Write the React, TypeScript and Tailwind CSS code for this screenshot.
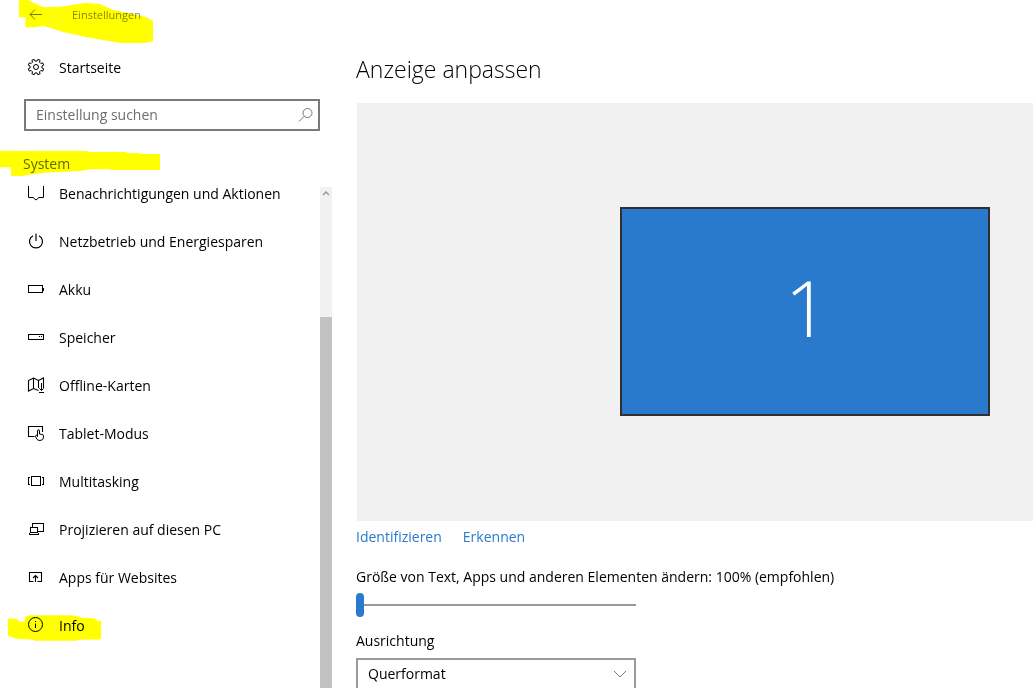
import React, { useState } from "react";

interface NavItem {
  label: string;
  icon: React.ReactNode;
}

interface IconProps {
  children: React.ReactNode;
  crisp?: boolean;
}

const Icon = ({ children, crisp }: IconProps) => (
  <svg
    viewBox="0 0 18 18"
    className="w-[18px] h-[18px] shrink-0"
    fill="none"
    stroke="currentColor"
    strokeWidth="1"
    shapeRendering={crisp ? "crispEdges" : "auto"}
    aria-hidden="true"
  >
    {children}
  </svg>
);

const GearIcon = () => {
  const points: string[] = [];
  for (let i = 0; i < 8; i++) {
    const steps = [
      [-13, 6],
      [-9, 7.9],
      [9, 7.9],
      [13, 6],
    ];
    steps.forEach(([offset, r]) => {
      const a = ((i * 45 + 22.5 + offset) * Math.PI) / 180;
      points.push(`${(9 + r * Math.cos(a)).toFixed(2)},${(9 + r * Math.sin(a)).toFixed(2)}`);
    });
  }
  return (
    <Icon>
      <polygon points={points.join(" ")} strokeLinejoin="round" />
      <circle cx="9" cy="9" r="2.5" />
    </Icon>
  );
};

const navItems: NavItem[] = [
  {
    label: "Benachrichtigungen und Aktionen",
    icon: (
      <Icon>
        <path d="M1.5 2v11.5H6L9 16l3-2.500h4.500V2" />
      </Icon>
    ),
  },
  {
    label: "Netzbetrieb und Energiesparen",
    icon: (
      <Icon>
        <path d="M6 3.700a6.500 6.500 0 1 0 6 0M9 1.500v7.500" strokeWidth="1.200" />
      </Icon>
    ),
  },
  {
    label: "Akku",
    icon: (
      <Icon crisp>
        <path d="M1.500 5.500h14v7h-14zM16.500 7.500v3" />
      </Icon>
    ),
  },
  {
    label: "Speicher",
    icon: (
      <Icon crisp>
        <path d="M1.500 6.500h15v5h-15zM12 8.500h1M14 8.500h1" />
      </Icon>
    ),
  },
  {
    label: "Offline-Karten",
    icon: (
      <Icon>
        <path d="M1.500 4.500L6.500 2l5 2.500 5-2.500V12M1.500 4.500v10.500L6.500 12.500l5 2M6.500 2v10.500M11.500 4.500V12" strokeWidth="1.100" />
        <path d="M14.500 7v7.500M12.300 12.300l2.200 2.200 2.200-2.200M12 16.500h5" />
      </Icon>
    ),
  },
  {
    label: "Tablet-Modus",
    icon: (
      <Icon>
        <path d="M7.500 12.500h-6v-10h14V8" strokeWidth="1.100" />
        <path d="M10.500 12.500V7q0-1.300 1-1.300t1 1.300v3l2.500.4q1.500.3 1.500 1.600v1q0 3.500-3.500 3.500-2.300 0-3.300-1.500l-1-2.200q-.5-1.600.7-1.600.6.100 1.100 1.300" />
      </Icon>
    ),
  },
  {
    label: "Multitasking",
    icon: (
      <Icon crisp>
        <path d="M4.500 4.500h9v9h-9zM3 5.500H1.500v7H3M15 5.500h1.500v7H15" />
      </Icon>
    ),
  },
  {
    label: "Projizieren auf diesen PC",
    icon: (
      <Icon crisp>
        <path d="M5.500 7V3.500h11v8H11M3.500 12V7.500h7V12M2.500 12.500h8M1.500 14.500h10M1.500 13.500h1M10.500 13.500h1" />
      </Icon>
    ),
  },
  {
    label: "Apps für Websites",
    icon: (
      <Icon>
        <path d="M6.500 13.500h-4v-9h12v9h-4M8.500 14V7.500M6 10l2.500-2.500L11 10" strokeWidth="1.100" />
      </Icon>
    ),
  },
  {
    label: "Info",
    icon: (
      <Icon>
        <circle cx="8.500" cy="8.500" r="7" />
        <path d="M8.500 7.500V12M8.500 5v1" />
      </Icon>
    ),
  },
];

// marker strokes, three units to a pixel
const marks = {
  title:
    "57,0 85,0 100,8 130,22 180,20 255,9 300,12 340,30 400,42 440,52 459,64 459,124 435,129 365,129 330,124 260,112 190,96 130,77 105,82 76,82 76,52 57,52",
  system:
    "0,0 263,0 265,3 378,3 380,6 420,7 422,9 480,9 480,57 333,57 332,55 270,55 238,60 195,62 130,65 88,71 70,75 33,75 33,49 0,49",
  info: "0,11 26,11 34,19 51,19 51,5 63,0 191,0 208,3 223,8 258,9 268,17 279,17 279,71 274,73 208,74 208,77 78,77 78,74 51,72 24,71 0,62",
};

const Sidebar = () => (
  <aside className="w-[332px] shrink-0 flex flex-col">
    <header className="relative flex items-center h-[30px] pl-[27px]">
      <button type="button" aria-label="Zurück" className="text-[#777]">
        <Icon>
          <path d="M15 8.500H3M8 3.500l-5 5 5 5" />
        </Icon>
      </button>
      <span className="pl-[27px] text-[11px] text-[#888]">Einstellungen</span>
      <svg
        viewBox="0 0 459 129"
        className="absolute left-0 top-0 w-[153px] h-[43px] mix-blend-multiply pointer-events-none"
        aria-hidden="true"
      >
        <polygon points={marks.title} fill="#ffff00" />
      </svg>
    </header>

    <a href="#startseite" className="flex items-center gap-[14px] h-12 mt-[13px] pl-[27px]">
      <GearIcon />
      Startseite
    </a>

    <div className="flex items-center h-8 mt-2 ml-6 mr-3 border-2 border-[#7a7a7a]">
      <input
        type="text"
        aria-label="Einstellung suchen"
        placeholder="Einstellung suchen"
        className="flex-1 min-w-0 h-full pb-[2px] pl-[10px] outline-none placeholder:text-[#6d6d6d]"
      />
      <button type="button" aria-label="Suchen" className="pr-[3px] text-[#777]">
        <Icon>
          <circle cx="10.500" cy="7" r="4.500" />
          <path d="M7.300 10.200L2 15.500" />
        </Icon>
      </button>
    </div>

    <div className="relative h-6 mt-5 mb-3 pl-[23px] flex items-center text-[#666]">
      <h2>System</h2>
      <svg
        viewBox="0 0 480 75"
        className="absolute left-0 top-0 w-40 h-[25px] mix-blend-multiply pointer-events-none"
        aria-hidden="true"
      >
        <polygon points={marks.system} fill="#ffff00" />
      </svg>
    </div>

    <div className="flex flex-1 min-h-0">
      <nav className="flex-1 min-w-0">
        {/* list is scrolled down a little */}
        <ul className="-mt-[18px]">
          {navItems.map((item) => (
            <li key={item.label} className="relative">
              <a href="#" className="flex items-center gap-[14px] h-12 pl-[27px] whitespace-nowrap">
                {item.icon}
                {item.label}
              </a>
              {item.label === "Info" && (
                <svg
                  viewBox="0 0 279 77"
                  className="absolute left-2 top-[14px] w-[93px] h-[26px] mix-blend-multiply pointer-events-none"
                  aria-hidden="true"
                >
                  <polygon points={marks.info} fill="#ffff00" />
                </svg>
              )}
            </li>
          ))}
        </ul>
      </nav>
      <div className="w-3 flex flex-col bg-[#f1f1f1]">
        <svg viewBox="0 0 12 12" className="w-3 h-3" fill="none" stroke="#999" strokeWidth="1.500" aria-hidden="true">
          <path d="M3 8l3-3 3 3" />
        </svg>
        <div className="flex-1 mt-[118px] bg-[#c2c2c2]" />
      </div>
    </div>
  </aside>
);

const DisplaySettings = () => {
  const [scale, setScale] = useState(100);

  return (
    <main className="flex-1 min-w-0 flex flex-col pl-6">
      <h1 className="mt-[53px] h-8 leading-8 text-[23px] font-light">Anzeige anpassen</h1>

      <section className="flex items-center justify-end h-[418px] shrink-0 mt-[18px] ml-px pr-[43px] pb-[2px] bg-[#f1f1f1]">
        <button
          type="button"
          className="w-[370px] h-[209px] flex items-center justify-center pb-2 pl-1 border-2 border-[#303030] bg-[#2979cd] text-white text-[78px] leading-none font-light"
        >
          1
        </button>
      </section>

      <div className="flex gap-[21px] mt-1 leading-6 text-[#2979cd]">
        <a href="#identifizieren">Identifizieren</a>
        <a href="#erkennen">Erkennen</a>
      </div>

      <label htmlFor="scale" className="mt-4 leading-6">
        Größe von Text, Apps und anderen Elementen ändern: 100% (empfohlen)
      </label>
      <input
        id="scale"
        type="range"
        min={100}
        max={175}
        step={25}
        value={scale}
        onChange={(e) => setScale(Number(e.target.value))}
        className="appearance-none shrink-0 w-[280px] h-6 mt-1 bg-transparent [&::-webkit-slider-runnable-track]:h-[2px] [&::-webkit-slider-runnable-track]:bg-[#999] [&::-webkit-slider-thumb]:appearance-none [&::-webkit-slider-thumb]:w-2 [&::-webkit-slider-thumb]:h-6 [&::-webkit-slider-thumb]:-mt-[11px] [&::-webkit-slider-thumb]:rounded-full [&::-webkit-slider-thumb]:bg-[#2979cd]"
      />

      <label htmlFor="orientation" className="mt-3 leading-6">
        Ausrichtung
      </label>
      <div className="relative shrink-0 w-[280px] mt-[5px]">
        <select
          id="orientation"
          className="appearance-none w-full h-8 pl-[10px] pb-[2px] border-2 border-[#999] bg-white"
        >
          <option>Querformat</option>
          <option>Hochformat</option>
        </select>
        <svg
          viewBox="0 0 14 8"
          className="absolute right-[9px] top-3 w-[14px] h-2 pointer-events-none"
          fill="none"
          stroke="#777"
          aria-hidden="true"
        >
          <path d="M1 1l6 6 6-6" />
        </svg>
      </div>
    </main>
  );
};

const App = () => {
  return (
    <div className="flex h-screen overflow-hidden bg-white text-black text-[14px] font-['Open_Sans','Noto_Sans',sans-serif]">
      <Sidebar />
      <DisplaySettings />
    </div>
  );
};

export default App;
